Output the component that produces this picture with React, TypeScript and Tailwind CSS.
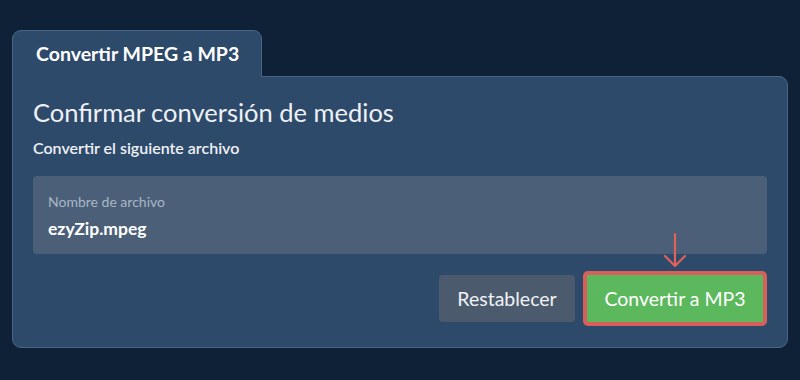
import React from "react";

export default function App() {
  return (
    <div
      className="w-[800px] h-[380px] bg-[#0f2137] pt-[30px] px-[12px]"
      style={{ fontFamily: "Lato, 'Open Sans', sans-serif" }}
    >
      <div className="flex">
        <div className="h-[47px] w-[250px] bg-[#2e4a6a] border border-b-0 border-[#4a6687] rounded-t-[9px] pl-[23px] pt-[9px] text-[19.5px] leading-[28px] font-bold text-white relative z-10 -mb-px">
          Convertir MPEG a MP3
        </div>
      </div>
      <div className="h-[272px] bg-[#2e4a6a] border border-[#4a6687] rounded-b-[9px] rounded-tr-[9px] px-[20px] pt-[19px]">
        <h1 className="text-[25.5px] leading-[32px] text-[#eef1f5]">Confirmar conversión de medios</h1>
        <p className="mt-[10px] text-[16px] leading-[20px] font-semibold text-[#eef1f5]">Convertir el siguiente archivo</p>
        <div className="mt-[18px] h-[78px] bg-[#4b6078] rounded-[4px] px-[15px] pt-[17px]">
          <div className="text-[14px] leading-[17px] text-[#a9b6c5]">Nombre de archivo</div>
          <div className="mt-[8px] text-[17.5px] leading-[21px] font-bold text-white">ezyZip.mpeg</div>
        </div>
        <div className="mt-[17px] flex justify-end items-center gap-[8px]">
          <button className="h-[47px] w-[136px] bg-[#4b5b6d] rounded-[4px] text-[19.5px] text-[#f0f2f5]">
            Restablecer
          </button>
          <div className="relative">
            <svg
              className="absolute left-1/2 -translate-x-1/2 -top-[40px]"
              width="24"
              height="38"
              viewBox="0 0 24 38"
              fill="none"
              stroke="#e0605a"
              strokeWidth="2.2"
              strokeLinecap="round"
              strokeLinejoin="round"
            >
              <path d="M12 3v32M2 25l10 10 10-10" />
            </svg>
            <button className="h-[55px] w-[184px] bg-[#5cb85c] border-[4px] border-[#d9605a] rounded-[5px] text-[19.5px] text-white">
              Convertir a MP3
            </button>
          </div>
        </div>
      </div>
    </div>
  );
}
